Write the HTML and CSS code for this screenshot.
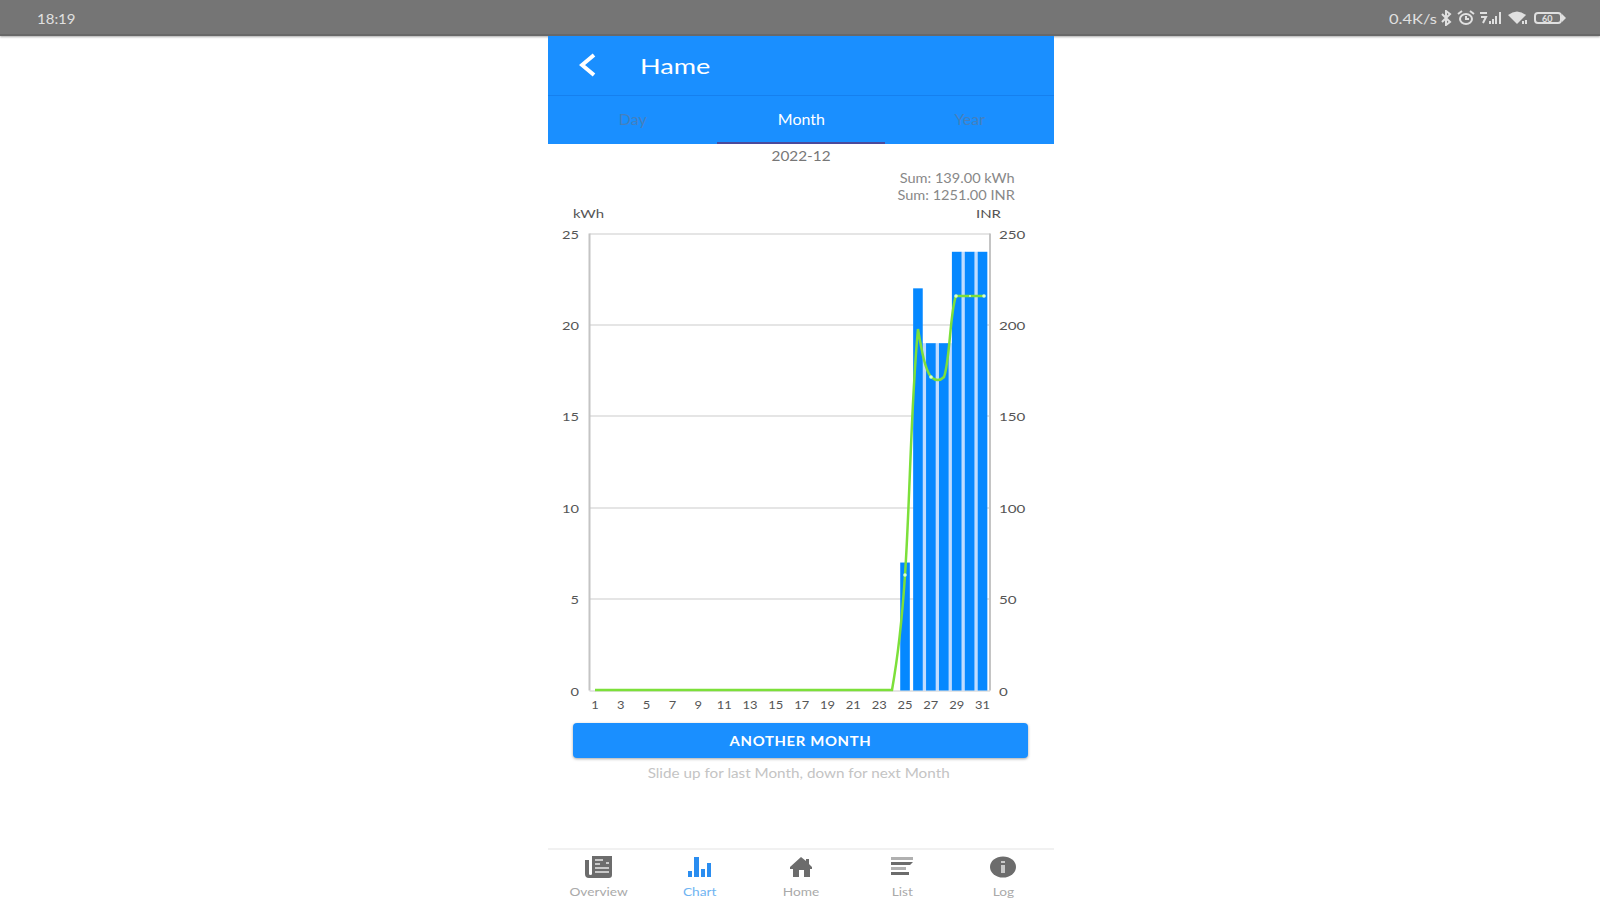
FILE: index.html
```
<!DOCTYPE html>
<html lang="en">
<head>
  <meta charset="UTF-8">
  <meta name="viewport" content="width=device-width, initial-scale=1.0">
  <title>Hame</title>
  <link rel="stylesheet" href="styles.css">
</head>
<body>
  <div class="status-bar">
    <span class="clock">18:19</span>
    <div class="status-icons">
      <span class="speed">0.4K/s</span>
      <svg class="bluetooth" width="12" height="16" viewBox="0 0 12 16"><path d="M2 4l8 8-4 3V1l4 3-8 8"/></svg>
      <svg class="alarm" width="18" height="16" viewBox="0 0 18 16"><ellipse cx="9" cy="9" rx="6" ry="5"/><path d="M9 6v3h3M1 4l4-3M17 4l-4-3"/></svg>
      <svg class="signal" width="24" height="14" viewBox="0 0 24 14"><path d="M1 2h7M2 6h5l-3 6M11 13v-3M14 13V8M17 13V5M21 13V1"/></svg>
      <svg class="wifi" width="20" height="14" viewBox="0 0 20 14"><path class="fill" d="M0 4q9-7 18 0l-9 9z"/><path d="M15 10v3M18 9v4"/></svg>
      <svg class="battery" width="32" height="12" viewBox="0 0 32 12"><rect x="1" y="1" width="26" height="10" rx="3"/><path class="fill" d="M28 2l4 4-4 4z"/><text x="8" y="9.5">60</text></svg>
    </div>
  </div>

  <div class="phone">
    <div class="header">
      <svg class="back" width="18" height="24" viewBox="0 0 18 24"><path d="M15 2L3 12l12 10"/></svg>
      <h1>Hame</h1>
    </div>
    <div class="tabs">
      <div class="tab"><span>Day</span></div>
      <div class="tab active"><span>Month</span></div>
      <div class="tab"><span>Year</span></div>
    </div>

    <div class="date"><span>2022-12</span></div>
    <div class="sums">
      <span>Sum: 139.00 kWh</span>
      <span>Sum: 1251.00 INR</span>
    </div>

    <svg class="chart" width="506" height="514" viewBox="0 0 506 514">
      <g class="units">
        <text x="25" y="16.500" textLength="31" lengthAdjust="spacingAndGlyphs">kWh</text>
        <text x="428" y="16.500" textLength="25" lengthAdjust="spacingAndGlyphs">INR</text>
      </g>
      <g id="grid"></g>
      <g id="bars"></g>
      <path class="cost" d="M47 489H344C350 455 354 420 357 374C362 300 363 200 370 128C374 152 377 168 383 176Q390 182 396 176C402 160 402 110 408 95H436"/>
      <g class="points">
        <circle cx="357" cy="374" r="1.8"/>
        <circle cx="383" cy="176" r="1.8"/>
        <circle cx="408" cy="95" r="1.8"/>
        <circle cx="422" cy="95" r="1"/>
        <circle cx="436" cy="95" r="1.8"/>
      </g>
      <g id="days"></g>
    </svg>

    <button class="button"><span>ANOTHER MONTH</span></button>
    <p class="hint"><span>Slide up for last Month, down for next Month</span></p>

    <div class="nav">
      <div class="nav-item">
        <svg width="28" height="22" viewBox="0 0 28 22"><path d="M7 0h20v19q0 3-3 3H4q-4 0-4-4V4h4v14q0 1 1.500 1T7 18z"/><path class="cut" d="M10 4h8M10 8h5M10 12h14M10 16h14M21 7h3"/></svg>
        <span>Overview</span>
      </div>
      <div class="nav-item active">
        <svg width="28" height="22" viewBox="0 0 28 22"><path d="M2 15h4v6H2zM8 1h5v20H8zM15 13h4v8h-4zM21 7h4v14h-4z"/></svg>
        <span>Chart</span>
      </div>
      <div class="nav-item">
        <svg width="28" height="22" viewBox="0 0 28 22"><path d="M14 1l5 4V3h3v5l3 3v2h-2v8h-6v-7h-5v7H6v-8H3v-2z"/></svg>
        <span>Home</span>
      </div>
      <div class="nav-item">
        <svg width="28" height="22" viewBox="0 0 28 22"><path class="light" d="M3 1h22v3H3z"/><path d="M3 6h22l-3 3H3zM3 16h18v3H3z"/><path class="light" d="M3 11h15v3H3z"/></svg>
        <span>List</span>
      </div>
      <div class="nav-item">
        <svg width="28" height="22" viewBox="0 0 28 22"><ellipse cx="14" cy="11" rx="13" ry="10.500"/><path class="cut wide" d="M14 5v2M14 9v8"/></svg>
        <span>Log</span>
      </div>
    </div>
  </div>

  <script>
    // kWh for each day of the month
    const usage = new Array(24).fill(0).concat([7, 22, 19, 19, 24, 24, 24]);
    const left = 41.5, right = 442, top0 = 32.5, bottom = 489.5;
    const step = (right - left) / usage.length;
    const y = v => bottom - v * (bottom - top0) / 25;

    let grid = '';
    for (let v = 0; v <= 25; v += 5) {
      const ly = Math.round(y(v));
      const w = String(v).length * 8.5;
      const rv = v * 10;
      grid += `<line x1="${left}" x2="${right}" y1="${ly}" y2="${ly}"/>`;
      grid += `<text x="${31 - w}" y="${ly + 5}" textLength="${w}" lengthAdjust="spacingAndGlyphs">${v}</text>`;
      grid += `<text x="451" y="${ly + 5}" textLength="${String(rv).length * 8.8}" lengthAdjust="spacingAndGlyphs">${rv}</text>`;
    }
    grid += `<path class="axis" d="M${left} ${top0}V${bottom}M${right} ${top0}V${bottom}"/>`;
    document.getElementById('grid').innerHTML = grid;

    let bars = '';
    let days = '';
    usage.forEach((v, i) => {
      const cx = left + step * (i + 0.5) - 1;
      if (v > 0) {
        // pale strip in the gap before the next bar
        const next = Math.min(v, usage[i + 1] || 0);
        if (next > 7) bars += `<rect class="gap" x="${cx + 4}" y="${y(next)}" width="5" height="${bottom - y(next)}"/>`;
        bars += `<rect class="bar" x="${cx - 4.8}" y="${y(v)}" width="9.6" height="${bottom - y(v)}"/>`;
      }
      if (i % 2 === 0) {
        const w = i < 9 ? 7.5 : 15;
        days += `<text x="${cx - w / 2}" y="508" textLength="${w}" lengthAdjust="spacingAndGlyphs">${i + 1}</text>`;
      }
    });
    document.getElementById('bars').innerHTML = bars;
    document.getElementById('days').innerHTML = days;
  </script>
</body>
</html>
```
FILE: styles.css
```
* {
  box-sizing: border-box;
}

body {
  margin: 0;
  height: 100vh;
  overflow: hidden;
  background-color: #fff;
  font-family: Lato, "Liberation Sans", sans-serif;
  display: flex;
  flex-direction: column;
  align-items: center;
}

.status-bar {
  width: 100%;
  height: 36px;
  flex: none;
  padding: 2px 34px 0 37px;
  background-color: #757575;
  border-bottom: 2px solid #686868;
  box-shadow: 0 1px 2px #aaa;
  color: #e0e0e0;
  display: flex;
  justify-content: space-between;
  align-items: center;
}

.clock, .speed {
  display: inline-block;
  font-size: 14px;
  transform: scaleX(1.07);
  transform-origin: left;
}

.speed {
  width: 51px;
  transform: scaleX(1.18);
}

.status-icons {
  display: flex;
  align-items: center;
}

.status-icons svg {
  fill: none;
  stroke: #e0e0e0;
  stroke-width: 2;
}

.status-icons .fill {
  fill: #e0e0e0;
  stroke: none;
}

.alarm { margin-left: 5px; }
.signal { margin-left: 4px; }
.wifi { margin-left: 5px; }
.battery { margin-left: 6px; }

.battery text {
  font-size: 9px;
  font-weight: bold;
  fill: #e0e0e0;
  stroke: none;
}

.phone {
  width: 506px;
  flex: 1;
  margin-left: 2px;
  display: flex;
  flex-direction: column;
}

.header {
  height: 60px;
  background-color: #1a8fff;
  border-bottom: 1px solid #1580ef;
  color: #fff;
  display: flex;
  align-items: center;
}

.back {
  margin: 0 0 2px 31px;
  fill: none;
  stroke: #fff;
  stroke-width: 4;
}

.header h1 {
  margin: 0 0 1px 43px;
  font-size: 22px;
  font-weight: 400;
  transform: scaleX(1.23);
  transform-origin: left;
}

.tabs {
  height: 48px;
  background-color: #1a8fff;
  display: flex;
}

.tab {
  flex: 1;
  color: #4580bd;
  font-size: 14.5px;
  text-align: center;
  line-height: 47px;
}

.tab.active {
  color: #fff;
  border-bottom: 2px solid #4b4a9c;
}

.tab span, .date span, .button span, .hint span {
  display: inline-block;
  transform: scaleX(1.1);
}

.date {
  height: 26px;
  line-height: 25px;
  font-size: 13px;
  color: #777;
  text-align: center;
}

.date span {
  transform: scaleX(1.18);
}

.sums {
  height: 31px;
  padding-right: 39px;
  display: flex;
  flex-direction: column;
  align-items: flex-end;
  font-size: 13px;
  line-height: 16.5px;
  color: #888;
}

.sums span {
  transform: scaleX(1.12);
  transform-origin: right;
}

.chart {
  display: block;
  flex: none;
}

.chart text {
  font-size: 12px;
  fill: #555;
}

#days text {
  font-size: 11.5px;
}

.chart line {
  stroke: #dcdcdc;
  stroke-width: 1.5;
}

.axis {
  fill: none;
  stroke: #c4c4c4;
  stroke-width: 2;
}

.bar { fill: #0588ff; }
.gap { fill: #bfdcff; }

.cost {
  fill: none;
  stroke: #7ce03a;
  stroke-width: 2.5;
}

.points {
  fill: #d8ffd0;
}

.button {
  flex: none;
  width: 455px;
  height: 35px;
  margin: 8px 0 0 25px;
  padding: 0;
  border: none;
  border-radius: 4px;
  background-color: #1a8fff;
  box-shadow: 0 1px 3px rgba(0, 0, 0, 0.35);
  color: #fff;
  font-family: inherit;
  font-size: 13.5px;
  font-weight: bold;
  letter-spacing: 0.6px;
}

.hint {
  margin: 5px 4px 0 0;
  font-size: 13.5px;
  line-height: 20px;
  color: #c4c4c4;
  text-align: center;
}

.hint span {
  transform: scaleX(1.13);
}

.nav {
  height: 52px;
  margin-top: auto;
  border-top: 2px solid #f1f1f1;
  display: flex;
}

.nav-item {
  flex: 1;
  padding-top: 6px;
  display: flex;
  flex-direction: column;
  align-items: center;
  font-size: 12px;
  line-height: 15px;
  color: #aaa;
}

.nav-item svg {
  fill: #6c6c6c;
  margin-bottom: 6px;
}

.nav-item span {
  transform: scaleX(1.14);
}

.nav-item .light {
  fill: #b0b0b0;
}

.nav-item .cut {
  fill: none;
  stroke: #c8c8c8;
  stroke-width: 1.8;
}

.nav-item .wide {
  stroke-width: 4;
}

.nav-item.active {
  color: #6fb4f2;
}

.nav-item.active svg {
  fill: #2a8df0;
}
```
